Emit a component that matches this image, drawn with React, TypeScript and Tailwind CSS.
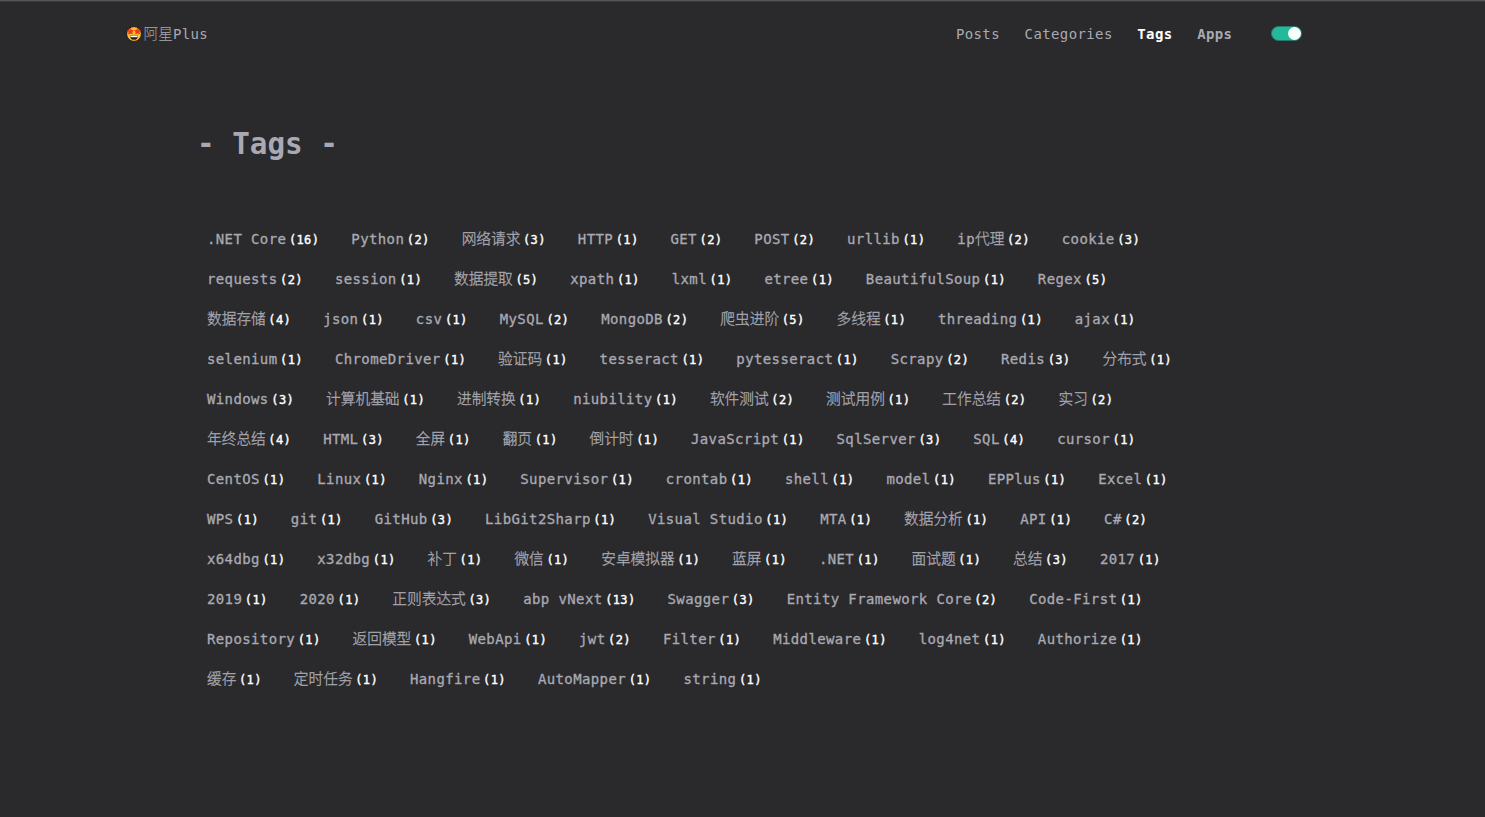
const MONO = "font-['DejaVu_Sans_Mono','Noto_Sans_CJK_SC',monospace]";

const rows: [string, number][][] = [
  [['.NET Core', 16], ['Python', 2], ['网络请求', 3], ['HTTP', 1], ['GET', 2], ['POST', 2], ['urllib', 1], ['ip代理', 2], ['cookie', 3]],
  [['requests', 2], ['session', 1], ['数据提取', 5], ['xpath', 1], ['lxml', 1], ['etree', 1], ['BeautifulSoup', 1], ['Regex', 5]],
  [['数据存储', 4], ['json', 1], ['csv', 1], ['MySQL', 2], ['MongoDB', 2], ['爬虫进阶', 5], ['多线程', 1], ['threading', 1], ['ajax', 1]],
  [['selenium', 1], ['ChromeDriver', 1], ['验证码', 1], ['tesseract', 1], ['pytesseract', 1], ['Scrapy', 2], ['Redis', 3], ['分布式', 1]],
  [['Windows', 3], ['计算机基础', 1], ['进制转换', 1], ['niubility', 1], ['软件测试', 2], ['测试用例', 1], ['工作总结', 2], ['实习', 2]],
  [['年终总结', 4], ['HTML', 3], ['全屏', 1], ['翻页', 1], ['倒计时', 1], ['JavaScript', 1], ['SqlServer', 3], ['SQL', 4], ['cursor', 1]],
  [['CentOS', 1], ['Linux', 1], ['Nginx', 1], ['Supervisor', 1], ['crontab', 1], ['shell', 1], ['model', 1], ['EPPlus', 1], ['Excel', 1]],
  [['WPS', 1], ['git', 1], ['GitHub', 3], ['LibGit2Sharp', 1], ['Visual Studio', 1], ['MTA', 1], ['数据分析', 1], ['API', 1], ['C#', 2]],
  [['x64dbg', 1], ['x32dbg', 1], ['补丁', 1], ['微信', 1], ['安卓模拟器', 1], ['蓝屏', 1], ['.NET', 1], ['面试题', 1], ['总结', 3], ['2017', 1]],
  [['2019', 1], ['2020', 1], ['正则表达式', 3], ['abp vNext', 13], ['Swagger', 3], ['Entity Framework Core', 2], ['Code-First', 1]],
  [['Repository', 1], ['返回模型', 1], ['WebApi', 1], ['jwt', 2], ['Filter', 1], ['Middleware', 1], ['log4net', 1], ['Authorize', 1]],
  [['缓存', 1], ['定时任务', 1], ['Hangfire', 1], ['AutoMapper', 1], ['string', 1]],
];

/** Splits mixed text so that Han characters keep their own size and spacing. */
function Mixed({ text }: { text: string }) {
  return (
    <>
      {(text.match(/[\u4e00-\u9fff]+|[^\u4e00-\u9fff]+/g) ?? []).map((run, i) =>
        /[\u4e00-\u9fff]/.test(run) ? (
          <span key={i} className="font-['Noto_Sans_CJK_SC',sans-serif] text-[14.7px] font-light tracking-normal">
            {run}
          </span>
        ) : (
          <span key={i}>{run}</span>
        ),
      )}
    </>
  );
}

function StarEyes() {
  return (
    <svg viewBox="0 0 16 16" className="h-4 w-4 shrink-0">
      <circle cx="8" cy="8" r="7.4" fill="#ffc22e" stroke="#1b1717" strokeWidth="1" />
      <path d="M4.5 2.500l.9 1.700 2 .3-1.400 1.500.3 2.100-1.800-.9-1.900.9.3-2.100L1.400 4.500l2.200-.3zM11.500 2.500l.9 1.700 2.200.3-1.500 1.500.3 2.100-1.900-.9-1.800.9.3-2.100L8.600 4.500l2-.3z" fill="#f0371c" stroke="#f0371c" strokeWidth=".7" />
      <path d="M4 9.5h8c0 2.800-1.600 4.600-4 4.600S4 12.300 4 9.500z" fill="#35160f" />
      <path d="M4.4 9.700h7.200v1.500H4.400z" fill="#fff" />
      <path d="M6.500 13.200c.9-.7 2.100-.7 3 0-.9.7-2.100.7-3 0z" fill="#e8402a" />
    </svg>
  );
}

function Header() {
  return (
    <header className="flex h-[64px] items-center justify-between border-t border-[#3a3b3e] pr-[183px] pl-[126px]">
      <a className="flex items-center gap-[1.5px]">
        <StarEyes />
        <span className="flex items-baseline"><Mixed text="阿星Plus" /></span>
      </a>
      <nav className="flex items-center gap-[24.6px] leading-5">
        <a className="pt-px">Posts</a>
        <a className="pt-px">Categories</a>
        <a className="pt-px font-bold text-white">Tags</a>
        <a className="pt-px font-bold">Apps</a>
        <button aria-label="Theme" className="ml-[14px] flex h-[15px] w-[31px] items-center justify-end rounded-full border border-[#2b796b] bg-[#23ba9b]">
          <span className="h-[13px] w-[13px] rounded-full bg-[#f8fff9]" />
        </button>
      </nav>
    </header>
  );
}

export default function App() {
  return (
    <div className={`${MONO} h-[817px] overflow-hidden border-t border-[#545558] bg-[#2a2a2c] text-[14px] tracking-[0.383px] whitespace-pre text-[#a9a9b3]`}>
      <Header />
      <main className="pl-[197px]">
        <h1 className="mt-[57px] h-[44px] text-[29.3px] leading-[44px] font-bold tracking-[-0.03px]">- Tags -</h1>
        <div className="mt-[53px] pl-[10px]">
          {rows.map((row, r) => (
            <div key={r} className="flex h-10 items-center gap-[32px]">
              {row.map(([name, count]) => (
                <a key={name} className="flex items-baseline leading-10">
                  <span className="[-webkit-text-stroke:0.3px_#a9a9b3]"><Mixed text={name} /></span>
                  <span className="ml-[2.6px] text-[12px] tracking-[0.38px] text-white [-webkit-text-stroke:0.4px_white]">({count})</span>
                </a>
              ))}
            </div>
          ))}
        </div>
      </main>
    </div>
  );
}
